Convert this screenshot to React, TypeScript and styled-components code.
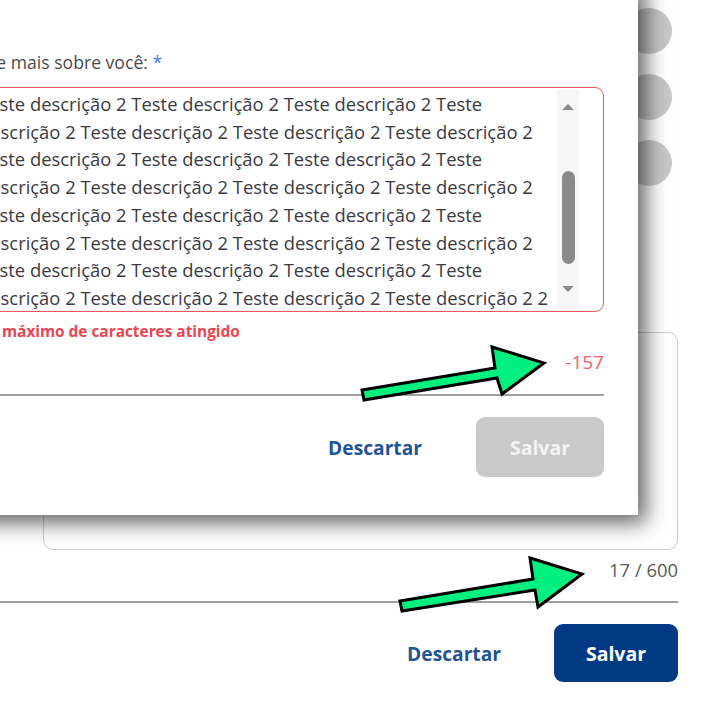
import React from "react";
import styled, { createGlobalStyle } from "styled-components";

const GlobalStyle = createGlobalStyle`
  html, body { margin: 0; padding: 0; background: #fff; }
  body { font-family: "Open Sans", "Noto Sans", sans-serif; overflow: hidden; }
  * { box-sizing: border-box; }
`;

const Page = styled.div`
  position: relative;
  width: 720px;
  height: 720px;
  overflow: hidden;
  background: #fff;
`;

const BackForm = styled.div`
  width: 678px;
  display: flex;
  flex-direction: column;
`;

const StepRail = styled.div`
  display: flex;
  flex-direction: column;
  align-items: flex-end;
  gap: 20px;
  padding: 8px 6px 0 0;
`;

const StepDot = styled.div`
  width: 46px;
  height: 46px;
  border-radius: 50%;
  background: #c8c8c8;
`;

const FieldBox = styled.div`
  margin: 146px 0 0 43px;
  height: 218px;
  border: 1.5px solid #cdcdcd;
  border-radius: 10px;
`;

const Counter = styled.div<{ $error?: boolean }>`
  margin-top: 10px;
  height: 20px;
  line-height: 20px;
  text-align: right;
  font-size: ${(p) => (p.$error ? 19 : 18.4)}px;
  color: ${(p) => (p.$error ? "#f0606a" : "#5a5a5a")};
`;

const Divider = styled.div<{ $gap: number }>`
  margin-top: ${(p) => p.$gap}px;
  height: 2px;
  background: #a0a0a0;
`;

const Actions = styled.div<{ $gap: number }>`
  margin-top: 21px;
  display: flex;
  justify-content: flex-end;
  align-items: center;
  gap: ${(p) => p.$gap}px;
`;

const TextButton = styled.button`
  border: none;
  background: none;
  padding: 0;
  font-family: inherit;
  font-weight: 700;
  font-size: 19.2px;
  color: #1f5595;
`;

const PrimaryButton = styled.button<{ $disabled?: boolean; $w: number; $h: number }>`
  width: ${(p) => p.$w}px;
  height: ${(p) => p.$h}px;
  border: none;
  border-radius: 9px;
  font-family: inherit;
  font-weight: 700;
  font-size: 19.5px;
  background: ${(p) => (p.$disabled ? "#c8c9c8" : "#003a85")};
  color: ${(p) => (p.$disabled ? "#f4f4f4" : "#ffffff")};
`;

const Modal = styled.div`
  position: absolute;
  left: -62px;
  top: -20px;
  width: 700px;
  padding: 70px 34px 38px 35px;
  background: #fff;
  box-shadow: 8px 8px 20px rgba(0, 0, 0, 0.6);
  display: flex;
  flex-direction: column;
`;

const Label = styled.div`
  font-size: 17.6px;
  line-height: 24px;
  color: #4a4a4a;
  white-space: nowrap;
`;

const Required = styled.span`
  color: #3f7ee0;
`;

const TextArea = styled.div`
  margin-top: 13px;
  height: 225px;
  border: 1.5px solid #ee5858;
  border-radius: 9px;
  display: flex;
  overflow: hidden;
  padding-left: 5px;
`;

const TextLines = styled.div`
  flex: 1;
  overflow: hidden;
  padding-top: 2px;
`;

const TextLine = styled.div`
  font-size: 18.4px;
  line-height: 27.7px;
  color: #3a3a40;
  white-space: nowrap;
`;

const ScrollTrack = styled.div`
  width: 22px;
  margin: 2px 24px 2px 0;
  background: #f7f7f7;
  display: flex;
  flex-direction: column;
  align-items: center;
`;

const ScrollArrow = styled.div<{ $down?: boolean }>`
  width: 0;
  height: 0;
  border-left: 6px solid transparent;
  border-right: 6px solid transparent;
  ${(p) =>
    p.$down
      ? "border-top: 6px solid #8a8a8a; margin-top: 22px;"
      : "border-bottom: 6px solid #8a8a8a; margin-top: 14px;"}
`;

const ScrollThumb = styled.div`
  margin-top: 61px;
  width: 13px;
  height: 93px;
  border-radius: 7px;
  background: #8a8a8a;
`;

const ErrorText = styled.div`
  margin: 10px 0 0 -24px;
  height: 20px;
  line-height: 20px;
  font-size: 15.4px;
  font-weight: 700;
  color: #ea4550;
  white-space: nowrap;
`;

const ArrowLayer = styled.svg`
  position: absolute;
  left: 0;
  top: 0;
  width: 720px;
  height: 720px;
  pointer-events: none;
`;

const odd = "Teste descrição 2 Teste descrição 2 Teste descrição 2 Teste";
const even = "descrição 2 Teste descrição 2 Teste descrição 2 Teste descrição 2";
const lines = [odd, even, odd, even, odd, even, odd, even + " 2"];

export default function App() {
  return (
    <>
      <GlobalStyle />
      <Page>
        <BackForm>
          <StepRail>
            <StepDot />
            <StepDot />
            <StepDot />
          </StepRail>
          <FieldBox />
          <Counter>17 / 600</Counter>
          <Divider $gap={21} />
          <Actions $gap={53}>
            <TextButton>Descartar</TextButton>
            <PrimaryButton $w={124} $h={58}>Salvar</PrimaryButton>
          </Actions>
        </BackForm>

        <Modal>
          <Label>
            Fale mais sobre você: <Required>*</Required>
          </Label>
          <TextArea>
            <TextLines>
              {lines.map((l, i) => (
                <TextLine key={i}>{l}</TextLine>
              ))}
            </TextLines>
            <ScrollTrack>
              <ScrollArrow />
              <ScrollThumb />
              <ScrollArrow $down />
            </ScrollTrack>
          </TextArea>
          <ErrorText>Limite máximo de caracteres atingido</ErrorText>
          <Counter $error>-157</Counter>
          <Divider $gap={22} />
          <Actions $gap={54}>
            <TextButton>Descartar</TextButton>
            <PrimaryButton $disabled $w={128} $h={60}>Salvar</PrimaryButton>
          </Actions>
        </Modal>

        <ArrowLayer viewBox="0 0 720 720">
          <polygon
            points="362,390 495,368 492,347 544,363 502,394 497,378 364,400"
            fill="#00f07f"
            stroke="#000"
            strokeWidth="3"
            strokeLinejoin="miter"
          />
          <polygon
            points="400,601 533,579 530,558 582,574 538,607 535,590 402,611"
            fill="#00f07f"
            stroke="#000"
            strokeWidth="3"
            strokeLinejoin="miter"
          />
        </ArrowLayer>
      </Page>
    </>
  );
}
